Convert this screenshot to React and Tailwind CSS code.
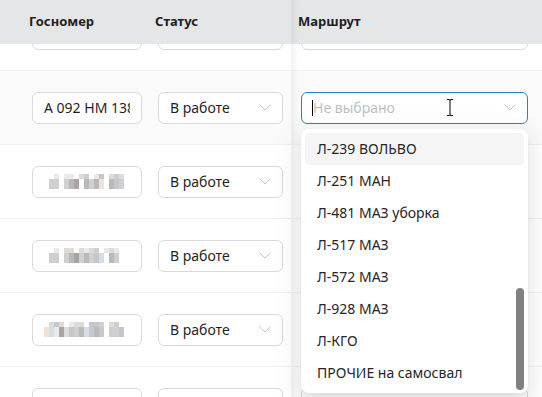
import React from 'react';

const font = { fontFamily: '"Noto Sans", "Open Sans", sans-serif' };

const shade = 'shadow-[inset_10px_0_8px_-8px_rgba(0,0,0,0.08)]';

const palette = {
  a: '#e9e9e9', b: '#cfcfcf', c: '#b9b9b9', d: '#a9a4a2', e: '#d6dde4',
  f: '#efe3d8', g: '#c4c8cc', h: '#dedad6', '.': 'transparent',
};

// pixelated (censored) plate numbers
const mosaics = [
  ['..a.aa.hb.ag.hbe.', '.bb.bcd.cbcf.cgb.', '.bb.bcd.cbcf.cgb.'],
  ['..a.hh.hahb.aha..', '.bb.bcdbcbge.cb..', '.bb.bcdbcbge.cb..'],
  ['.hgh.ahh.ggb.hb..', 'feadhgbcegcg.bbg.', 'feadhgbcegcg.bbg.'],
];

const Mosaic = ({ rows }) => (
  <div className="flex flex-col">
    {rows.map((r, i) => (
      <div key={i} className="flex">
        {r.split('').map((ch, j) => (
          <div key={j} className="w-[5px] h-[5px]" style={{ background: palette[ch] }} />
        ))}
      </div>
    ))}
  </div>
);

const Chevron = () => (
  <svg width="12" height="7" viewBox="0 0 12 7" fill="none" className="shrink-0">
    <path d="M0.5 0.5 L6 6 L11.5 0.5" stroke="#c4c4c4" strokeWidth="1" />
  </svg>
);

const Box = ({ w, children, active }) => (
  <div
    className={`h-8 ${w} rounded-md border bg-white flex items-center px-[11px] ${
      active ? 'border-[#1a87d8]' : 'border-[#d9d9d9]'
    }`}
  >
    {children}
  </div>
);

const StatusSelect = ({ empty }) => (
  <Box w="w-[125px]">
    <span className="flex-1 text-[14px] text-[#1f1f1f]">{empty ? '' : 'В работе'}</span>
    <Chevron />
  </Box>
);

const routes = [
  'Л-239 ВОЛЬВО',
  'Л-251 МАН',
  'Л-481 МАЗ уборка',
  'Л-517 МАЗ',
  'Л-572 МАЗ',
  'Л-928 МАЗ',
  'Л-КГО',
  'ПРОЧИЕ на самосвал',
];

const Dropdown = () => (
  <div className="absolute left-0 top-[37px] z-20 w-[227px] rounded-lg bg-white p-1 shadow-[0_6px_16px_rgba(0,0,0,0.08),0_3px_6px_-4px_rgba(0,0,0,0.12),0_9px_28px_8px_rgba(0,0,0,0.05)]">
    {routes.map((r, i) => (
      <div
        key={r}
        className={`h-8 flex items-center px-3 rounded text-[14px] text-[#262626] ${
          i === 0 ? 'bg-[#f5f5f5]' : ''
        }`}
      >
        {r}
      </div>
    ))}
    <div className="absolute right-1 bottom-[3px] w-2 h-[102px] rounded-full bg-[#808080]" />
  </div>
);

const IBeam = () => (
  <svg
    className="absolute left-[145px] top-[6px] z-10"
    width="8"
    height="19"
    viewBox="0 0 8 19"
    fill="none"
  >
    <path d="M1 1.5 H3 Q4 1.5 4 2.5 V16.5 Q4 17.5 3 17.5 H1 M7 1.5 H5 Q4 1.5 4 2.5 M4 16.5 Q4 17.5 5 17.5 H7" stroke="#fff" strokeWidth="2.5" />
    <path d="M1 1.5 H3 Q4 1.5 4 2.5 V16.5 Q4 17.5 3 17.5 H1 M7 1.5 H5 Q4 1.5 4 2.5 M4 16.5 Q4 17.5 5 17.5 H7" stroke="#000" strokeWidth="1" />
  </svg>
);

const RouteSelect = ({ open }) => (
  <div className="relative">
    <Box w="w-[227px]" active={open}>
      {open && <div className="w-px h-4 bg-black -ml-[1px]" />}
      <span className="flex-1 text-[14px] text-[#bfbfbf]">{open ? 'Не выбрано' : ''}</span>
      <Chevron />
    </Box>
    {open && (
      <>
        <IBeam />
        <Dropdown />
      </>
    )}
  </div>
);

const Cells = ({ plate, mosaic, open, empty }) => (
  <>
    <div className="pl-8">
      <Box w="w-[110px]">
        {plate && (
          <span className="whitespace-nowrap overflow-hidden text-[14px] text-[#1f1f1f]">
            {plate}
          </span>
        )}
        {mosaic && <Mosaic rows={mosaic} />}
      </Box>
    </div>
    <div className="pl-4">
      <StatusSelect empty={empty} />
    </div>
    <div className={`pl-[10px] h-full flex items-center ${shade}`}>
      <RouteSelect open={open} />
    </div>
  </>
);

const Row = ({ hover, ...props }) => (
  <div
    className={`grid grid-cols-[142px_149px_251px] h-[74px] items-center border-b border-[#f0f0f0] ${
      hover ? 'bg-[#fafafa]' : 'bg-white'
    }`}
  >
    <Cells {...props} />
  </div>
);

// row scrolled partly under the header
const CutRow = () => (
  <div className="h-[27px] overflow-hidden border-b border-[#f0f0f0] bg-white">
    <div className="grid grid-cols-[142px_149px_251px] h-[73px] items-center -mt-[47px]">
      <Cells empty />
    </div>
  </div>
);

export default function App() {
  return (
    <div className="w-[542px] h-[397px] overflow-hidden bg-white" style={font}>
      <div className="grid grid-cols-[142px_149px_251px] h-[44px] items-center bg-[#e5e6e8] text-[13px] font-bold text-[#1f1f1f]">
        <div className="pl-[29px]">Госномер</div>
        <div className="pl-[13px]">Статус</div>
        <div className={`pl-[7px] h-full flex items-center ${shade}`}>Маршрут</div>
      </div>
      <CutRow />
      <Row hover open plate="А 092 НМ 138" />
      <Row mosaic={mosaics[0]} />
      <Row mosaic={mosaics[1]} />
      <Row mosaic={mosaics[2]} />
      <Row empty />
    </div>
  );
}
